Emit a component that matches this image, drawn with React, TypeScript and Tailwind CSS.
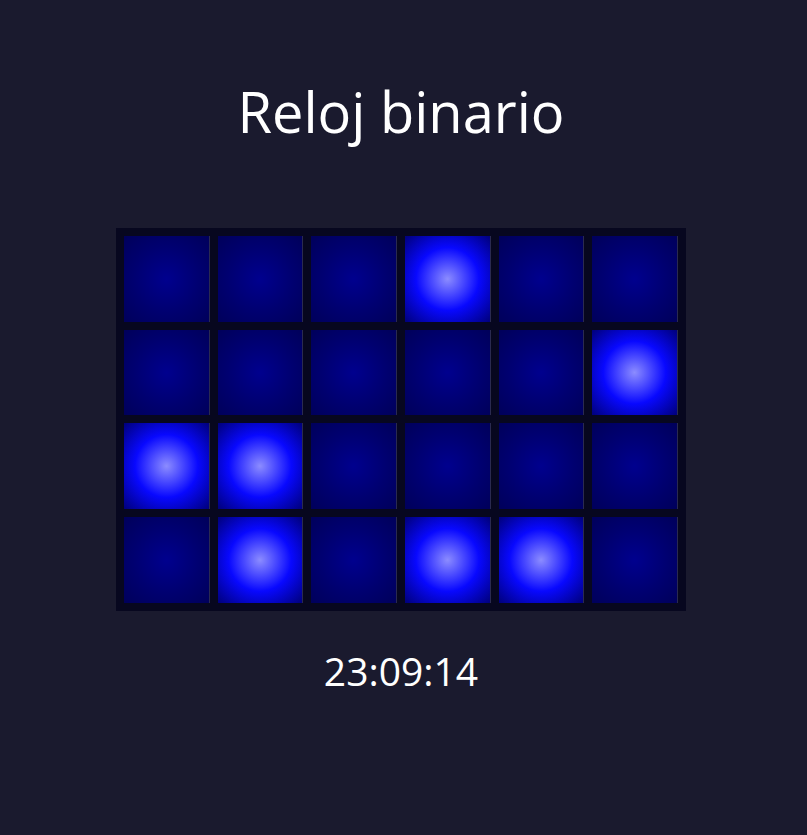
import { useMemo } from "react"

// 23:09:14 → columnas HH MM SS, filas de bits 8/4/2/1
const TIME = "23:09:14"
const BITS = [8, 4, 2, 1]

function Cell({ on }: { on: boolean }) {
  return (
    <div
      className={
        on
          ? "aspect-square border-r border-[#2a2a50] bg-[radial-gradient(circle,#8c8cff_0%,#0808ff_52%,#00007a_100%)]"
          : "aspect-square border-r border-[#2a2a50] bg-[radial-gradient(circle,#00008e_0%,#000070_55%,#00005a_100%)]"
      }
    />
  )
}

export default function App() {
  const digits = useMemo(() => TIME.replace(/:/g, "").split("").map(Number), [])

  return (
    <div
      className="flex min-h-[835px] flex-col items-center bg-[#1a1a2e] pr-[5px] text-white"
      style={{ fontFamily: '"Open Sans", "Noto Sans", sans-serif' }}
    >
      <h1 className="mt-[83px] text-[56px] leading-none font-normal">Reloj binario</h1>

      <div className="mt-[89px] grid w-[570px] grid-cols-6 gap-2 bg-[#07071f] p-2">
        {BITS.map((b) =>
          digits.map((d, i) => <Cell key={`${b}-${i}`} on={(d & b) !== 0} />)
        )}
      </div>

      <p className="mt-[40px] text-[39px] leading-none">{TIME}</p>
    </div>
  )
}
